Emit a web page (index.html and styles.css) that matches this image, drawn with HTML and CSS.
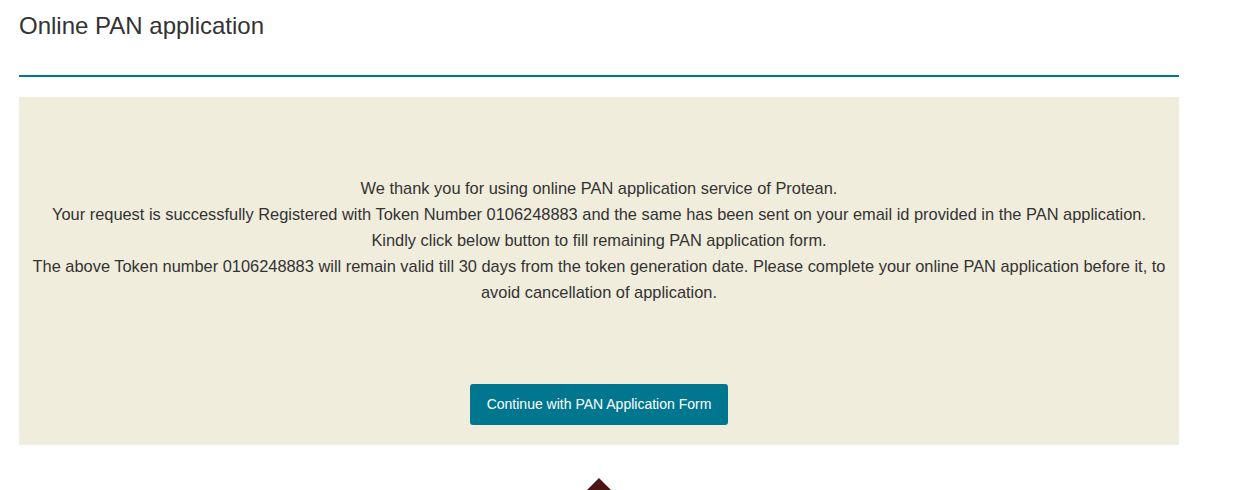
FILE: index.html
```html
<!DOCTYPE html>
<html lang="en">
<head>
<meta charset="utf-8">
<title>Online PAN application</title>
<link rel="stylesheet" href="styles.css">
</head>
<body>
<div class="page">
  <h1 class="title">Online PAN application</h1>
  <div class="rule"></div>
  <div class="panel">
    <div class="message">
      <p>We thank you for using online PAN application service of Protean.</p>
      <p>Your request is successfully Registered with Token Number 0106248883 and the same has been sent on your email id provided in the PAN application.</p>
      <p>Kindly click below button to fill remaining PAN application form.</p>
      <p>The above Token number 0106248883 will remain valid till 30 days from the token generation date. Please complete your online PAN application before it, to avoid cancellation of application.</p>
    </div>
    <div class="actions">
      <button class="btn" type="button">Continue with PAN Application Form</button>
    </div>
  </div>
  <div class="totop-wrap"><span class="totop"></span></div>
</div>
</body>
</html>
```
FILE: styles.css
```css
html, body {
  margin: 0;
  padding: 0;
  background: #ffffff;
  overflow: hidden;
}
body {
  font-family: "Liberation Sans", Arial, sans-serif;
  color: #333333;
}
.page {
  width: 1160px;
  margin-left: 19px;
}
.title {
  margin: 0;
  padding-top: 12px;
  font-size: 24px;
  font-weight: normal;
  line-height: 28px;
  color: #333333;
  height: 63px;
}
.rule {
  height: 2px;
  background: #00778f;
}
.panel {
  margin-top: 20px;
  background: #f0eddd;
  padding: 78px 10px 20px;
}
.message {
  text-align: center;
  font-size: 16.4px;
  line-height: 26px;
}
.message p {
  margin: 0;
}
.actions {
  display: flex;
  justify-content: center;
  margin-top: 79px;
}
.btn {
  font-family: "Liberation Sans", Arial, sans-serif;
  font-size: 14px;
  line-height: 19px;
  color: #ffffff;
  background: #00778f;
  border: 0;
  border-radius: 3px;
  padding: 11px 17px;
  height: 41px;
}
.totop-wrap {
  display: flex;
  justify-content: center;
  margin-top: 33px;
}
.totop {
  width: 0;
  height: 0;
  border-left: 14px solid transparent;
  border-right: 14px solid transparent;
  border-bottom: 14px solid #4b1515;
}
```
